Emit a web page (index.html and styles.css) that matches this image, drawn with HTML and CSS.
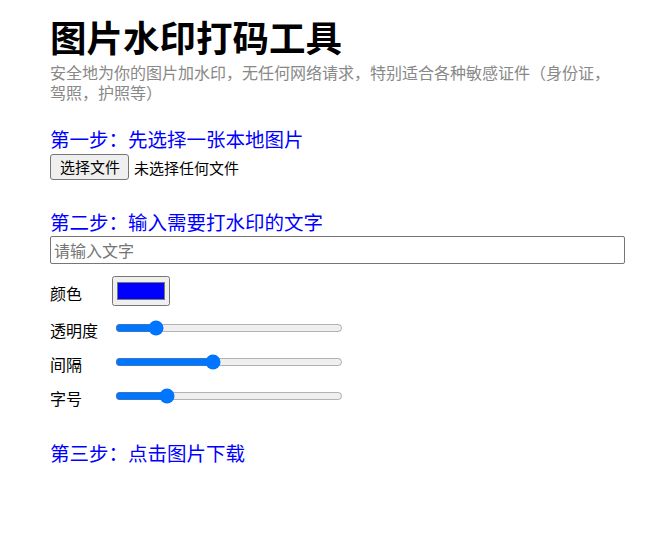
FILE: index.html
```html
<!DOCTYPE html>
<html lang="zh-CN">
<head>
    <meta charset="UTF-8">
    <meta name="viewport" content="width=device-width, initial-scale=1.0">
    <title>图片水印打码工具</title>
    <link rel="stylesheet" href="styles.css">
</head>
<body>

    <div class="page">
        <h1>图片水印打码工具</h1>
        <p class="intro">安全地为你的图片加水印，无任何网络请求，特别适合各种敏感证件（身份证，驾照，护照等）</p>

        <h3 class="step step-first">第一步：先选择一张本地图片</h3>
        <div class="file-row">
            <label class="file-btn" for="file">选择文件</label>
            <span class="file-name">未选择任何文件</span>
            <input type="file" id="file" accept="image/*" class="file-hidden">
        </div>

        <h3 class="step step-second">第二步：输入需要打水印的文字</h3>
        <input type="text" class="text-input" placeholder="请输入文字">

        <div class="settings">
            <div class="row row-color">
                <label for="color">颜色</label>
                <input type="color" id="color" value="#0000ff">
            </div>
            <div class="row">
                <label for="alpha">透明度</label>
                <input type="range" id="alpha" min="0" max="1000" value="154">
            </div>
            <div class="row">
                <label for="space">间隔</label>
                <input type="range" id="space" min="0" max="1000" value="426">
            </div>
            <div class="row">
                <label for="size">字号</label>
                <input type="range" id="size" min="0" max="1000" value="206">
            </div>
        </div>

        <h3 class="step step-third">第三步：点击图片下载</h3>
    </div>

</body>
</html>
```

FILE: styles.css
```css
body {
    font-family: "Microsoft YaHei", "Noto Sans CJK SC", "Noto Sans", sans-serif;
    margin: 0;
    background-color: #fff;
    color: #000;
}
.page {
    max-width: 575px;
    padding: 17px 0 0 50px;
}
h1 {
    margin: 0;
    font-size: 36.5px;
    line-height: 40px;
    font-weight: bold;
}
.intro {
    margin: 5px 0 0;
    font-size: 16px;
    line-height: 20px;
    color: #888;
}
.step {
    margin: 0;
    font-size: 19.5px;
    line-height: 24px;
    font-weight: normal;
    color: blue;
}
.step-first { margin-top: 25px; }
.step-second { margin-top: 30px; }
.step-third { margin-top: 33px; }

.file-row {
    display: flex;
    align-items: center;
    margin-top: 3px;
    height: 26px;
    font-size: 15px;
}
.file-btn {
    box-sizing: border-box;
    height: 26px;
    line-height: 24px;
    padding: 0 8px 0 9px;
    border: 1px solid #767676;
    border-radius: 3px;
    background-color: #efefef;
    cursor: pointer;
}
.file-name {
    margin-left: 5px;
}
.file-hidden {
    display: none;
}
.text-input {
    display: block;
    box-sizing: border-box;
    width: 100%;
    height: 28px;
    margin-top: 2px;
    padding: 0 3px;
    font-family: inherit;
    font-size: 16px;
    border: 1px solid #767676;
    border-radius: 2px;
}
.text-input::placeholder {
    color: #757575;
}
.settings {
    display: flex;
    flex-direction: column;
    gap: 10px;
    margin-top: 12px;
}
.row {
    display: flex;
    align-items: center;
    height: 24px;
    font-size: 16px;
}
.row-color {
    height: 30px;
}
.row label {
    width: 62px;
    flex-shrink: 0;
    padding-top: 3px;
}
.row input[type="color"] {
    box-sizing: border-box;
    width: 58px;
    height: 30px;
    margin: 0;
}
.row input[type="range"] {
    width: 228px;
    margin: 2px 2px 2px 3px;
}
```
